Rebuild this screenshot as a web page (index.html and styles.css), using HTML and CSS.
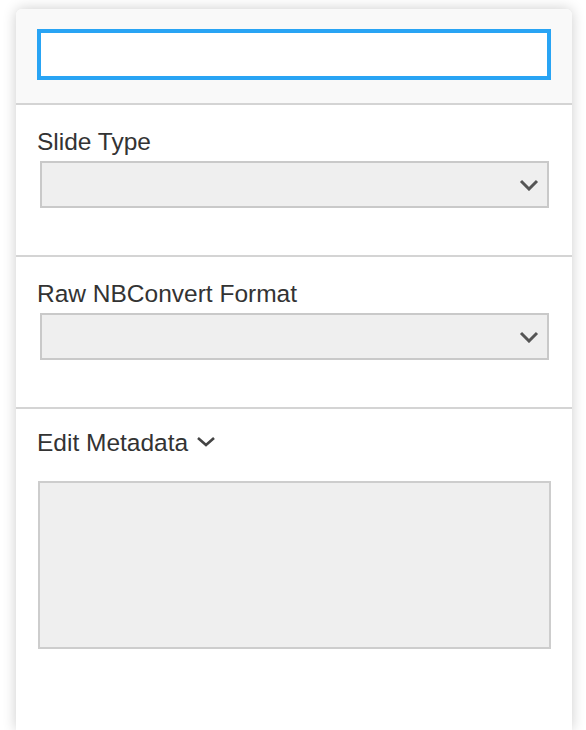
FILE: index.html
```html
<!DOCTYPE html>
<html lang="en">
<head>
<meta charset="utf-8">
<title>Cell Tools</title>
<link rel="stylesheet" href="styles.css">
</head>
<body>
<div class="panel">
  <div class="header">
    <div class="focus-input"></div>
  </div>
  <div class="section">
    <div class="label">Slide Type</div>
    <div class="select">
      <svg class="chev" width="20" height="12" viewBox="0 0 20 12"><polyline points="2,2 10,10 18,2" fill="none" stroke="#555" stroke-width="3"/></svg>
    </div>
  </div>
  <div class="section">
    <div class="label">Raw NBConvert Format</div>
    <div class="select">
      <svg class="chev" width="20" height="12" viewBox="0 0 20 12"><polyline points="2,2 10,10 18,2" fill="none" stroke="#555" stroke-width="3"/></svg>
    </div>
  </div>
  <div class="section meta">
    <div class="label meta-label">Edit Metadata
      <svg class="meta-chev" width="20" height="11" viewBox="0 0 20 11"><polyline points="2,2 10,9 18,2" fill="none" stroke="#444" stroke-width="2.6"/></svg>
    </div>
    <div class="textarea"></div>
  </div>
</div>
</body>
</html>
```
FILE: styles.css
```css
html, body {
  margin: 0;
  padding: 0;
  background: #ffffff;
  overflow: hidden;
}
body {
  font-family: "Liberation Sans", Arial, sans-serif;
  color: #333333;
}
.panel {
  margin: 9px 0 0 16px;
  width: 556px;
  height: calc(100vh - 9px);
  background: #ffffff;
  border-radius: 6px 6px 0 0;
  box-shadow: 0 0 14px rgba(0, 0, 0, 0.2);
}
.header {
  background: #f9f9f9;
  padding: 20px 21px 23px 21px;
  border-radius: 6px 6px 0 0;
}
.focus-input {
  box-sizing: border-box;
  height: 51px;
  background: #ffffff;
  border: 4px solid #29a4f4;
}
.section {
  border-top: 2px solid #d4d4d4;
  padding: 23px 0 47px 0;
}
.label {
  font-size: 24.5px;
  line-height: 28px;
  padding-left: 21px;
}
.select {
  box-sizing: border-box;
  margin: 5px 0 0 24px;
  width: 509px;
  height: 47px;
  background: #efefef;
  border: 2px solid #c9c9c9;
  display: flex;
  align-items: center;
  justify-content: flex-end;
  padding-right: 8px;
}
.chev {
  display: block;
}
.meta {
  padding-top: 20px;
}
.meta-label {
  display: flex;
  align-items: center;
  gap: 8px;
}
.meta-chev {
  display: block;
  margin-top: -3px;
}
.textarea {
  box-sizing: border-box;
  margin: 24px 0 0 22px;
  width: 513px;
  height: 168px;
  background: #efefef;
  border: 2px solid #cdcdcd;
}
```
